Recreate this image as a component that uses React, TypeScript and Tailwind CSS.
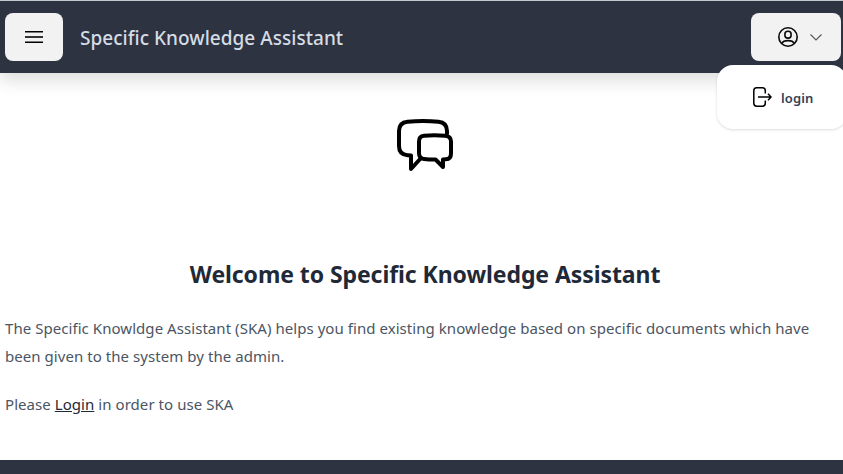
import React from "react";

function MenuIcon() {
  return (
    <svg width="18" height="12" viewBox="0 0 18 12" className="shrink-0">
      <path d="M0 .7h18M0 11.3h18" stroke="#000" strokeWidth="1.4" />
      <path d="M0 6h18" stroke="#333" strokeWidth="2" />
    </svg>
  );
}

function UserIcon() {
  return (
    <svg width="20" height="20" viewBox="0 0 20 20" fill="none" stroke="#0a0a0a" strokeWidth="1.6" className="shrink-0">
      <circle cx="10" cy="10" r="9.2" />
      <rect x="6.9" y="4.3" width="6.2" height="6.8" rx="2.9" />
      <path d="M3.7 16.5c1-2.1 3.4-2.9 6.3-2.9s5.3.8 6.3 2.9" />
    </svg>
  );
}

function LogoutIcon() {
  return (
    <svg width="19" height="20" viewBox="0 0 19 20" fill="none" stroke="#000" strokeWidth="1.5" className="shrink-0">
      <path d="M12.3 6.5V3.7Q12.3.8 9.4.8H3.7Q.8.8.8 3.7v12.6q0 2.9 2.9 2.9h5.7q2.9 0 2.9-2.9v-2.8" />
      <path d="M5 10h12.6M15 6.8l3 3.2-3 3.2" />
    </svg>
  );
}

function ChatIcon() {
  return (
    <svg width="58" height="54" viewBox="0 0 58 54" fill="none" stroke="#000" strokeWidth="4" strokeLinejoin="round" strokeLinecap="round">
      <path d="M51 15.5V13Q51 4.5 42.5 3.7Q27 2.3 11.5 3.7Q3 4.5 3 13v15q0 8.5 8.5 9.3L15 37.6V51L25 40" />
      <path d="M28 17.7Q38.5 17 49 17.7Q55 18.2 55 23.5V35.5Q55 41 50 41.3L47 41.5V49L39.5 41.5Q34 41.6 28 41Q23 40.5 23 35V23.5Q23 18.2 28 17.7Z" />
    </svg>
  );
}

export default function App() {
  return (
    <div className="flex h-[474px] w-[843px] flex-col overflow-hidden bg-white font-['Noto_Sans',sans-serif]">
      <header className="relative flex h-[73px] shrink-0 items-center justify-between border-t border-[#c4c8ca] bg-[#2d3341] pl-[5px] pr-[2px] shadow-[0_8px_16px_rgba(0,0,0,0.13)]">
        <div className="flex items-center gap-[17px]">
          <button aria-label="Menu" className="flex h-12 w-[58px] items-center justify-center rounded-lg bg-[#f2f2f2]">
            <MenuIcon />
          </button>
          <span className="mt-0.5 whitespace-nowrap text-[19px] font-medium leading-7 tracking-[0.03px] text-[#d5dce5]">Specific Knowledge Assistant</span>
        </div>
        <button aria-label="Account" className="flex h-12 w-[90px] items-center gap-3 rounded-lg bg-[#f2f2f2] pl-[27px]">
          <UserIcon />
          <svg width="12" height="7" viewBox="0 0 12 7" fill="none" stroke="#555" strokeWidth="1.1"><path d="m.5.5 5.5 5.5L11.5.5" /></svg>
        </button>
        <div className="absolute -right-1 top-16 flex h-16 w-[130px] items-center gap-[9px] rounded-2xl bg-white pl-9 shadow-[0_1px_3px_rgba(0,0,0,0.14)]">
          <LogoutIcon />
          <span className="mt-0.5 text-[13px] font-semibold leading-5 tracking-[0.1px] text-[#334155]">login</span>
        </div>
      </header>
      <main className="flex grow flex-col px-[5px] text-[#4b5563]">
        <div className="flex h-[146px] justify-center pl-[7px] pt-[45px]"><ChatIcon /></div>
        <h1 className="mt-[39px] whitespace-nowrap pl-[7px] text-center text-[23px] font-bold leading-8 tracking-[-0.08px] text-[#1f2937]">Welcome to Specific Knowledge Assistant</h1>
        <p className="mt-6 text-[15px] leading-7 tracking-[0.055px]">The Specific Knowldge Assistant (SKA) helps you find existing knowledge based on specific documents which have<br />been given to the system by the admin.</p>
        <p className="mt-5 text-[15px] leading-7 tracking-[0.055px]">Please <a className="text-[#1f2937] underline">Login</a> in order to use SKA</p>
      </main>
      <footer className="h-[14px] shrink-0 bg-[#2d3341]" />
    </div>
  );
}
